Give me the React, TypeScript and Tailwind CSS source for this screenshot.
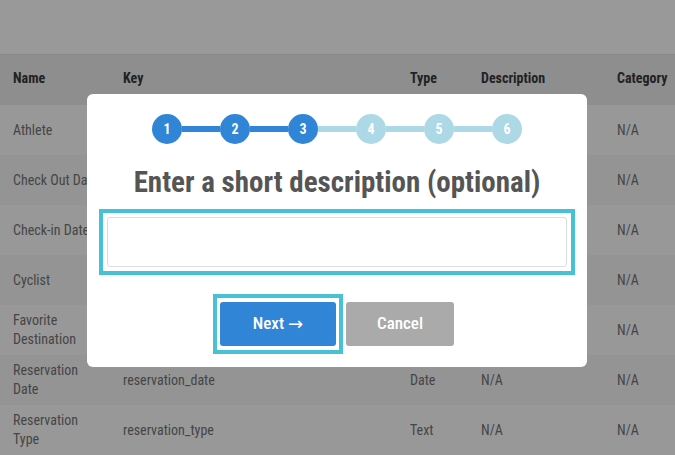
const rows = [
  { name: "Athlete", key: "athlete", type: "Checkbox", desc: "N/A", cat: "N/A" },
  { name: "Check Out Date", key: "check_out_date", type: "Date", desc: "N/A", cat: "N/A" },
  { name: "Check-in Date", key: "check_in_date", type: "Date", desc: "N/A", cat: "N/A" },
  { name: "Cyclist", key: "cyclist", type: "Checkbox", desc: "N/A", cat: "N/A" },
  { name: "Favorite Destination", key: "favorite_destination", type: "Text", desc: "N/A", cat: "N/A" },
  { name: "Reservation Date", key: "reservation_date", type: "Date", desc: "N/A", cat: "N/A" },
  { name: "Reservation Type", key: "reservation_type", type: "Text", desc: "N/A", cat: "N/A" },
];

function Stepper() {
  const steps = [1, 2, 3, 4, 5, 6];
  return (
    <div className="flex items-center justify-center">
      {steps.map((s, i) => (
        <div key={s} className="flex items-center">
          {i > 0 && (
            <div className={`h-[6px] w-[38px] ${s <= 3 ? "bg-[#3185d6]" : "bg-[#add8e6]"}`} />
          )}
          <div
            className={`flex h-[30px] w-[30px] items-center justify-center rounded-full text-[14px] font-bold text-white ${
              s <= 3 ? "bg-[#3185d6]" : "bg-[#add8e6]"
            }`}
          >
            {s}
          </div>
        </div>
      ))}
    </div>
  );
}

export default function App() {
  return (
    <div className="relative h-[455px] w-[675px] overflow-hidden bg-[#999999] font-['Roboto_Condensed',_'Roboto',_sans-serif] text-[14px]">
      <div className="h-[55px] border-b border-[#888888]" />
      <div className="flex h-[50px] items-center bg-[#8e8e8e] pb-[4px] pl-[13px] font-bold text-[#222222]">
        <div className="w-[110px]">Name</div>
        <div className="w-[287px]">Key</div>
        <div className="w-[71px]">Type</div>
        <div className="w-[136px]">Description</div>
        <div className="flex-1">Category</div>
      </div>
      {rows.map((r, i) => (
        <div
          key={r.key}
          className={`flex h-[50px] items-center pl-[13px] leading-[19px] text-[#454545] ${
            i % 2 === 0 ? "bg-[#989898]" : "bg-[#949494]"
          }`}
        >
          <div className="w-[110px] pr-[20px]">{r.name}</div>
          <div className="w-[287px]">{r.key}</div>
          <div className="w-[71px]">{r.type}</div>
          <div className="w-[136px]">{r.desc}</div>
          <div className="flex-1">{r.cat}</div>
        </div>
      ))}

      <div className="absolute left-[87px] top-[94px] flex w-[500px] flex-col items-center rounded-[6px] bg-white pb-[21px] pt-[20px]">
        <Stepper />
        <h1 className="mt-[20px] text-center text-[29px] font-bold leading-[36px] text-[#555555]">
          Enter a short description (optional)
        </h1>
        <div className="-mx-[8px] mt-[9px] border-4 border-[#47c1d4] p-[4px]">
          <input
            type="text"
            className="block h-[50px] w-[460px] rounded-[3px] border border-[#dddddd] bg-white outline-none"
          />
        </div>
        <div className="mt-[27px] flex justify-center gap-[10px]">
          <div className="-mx-[7px] -my-[8px] border-4 border-[#47c1d4] px-[3px] py-[4px]">
            <button className="flex h-[44px] w-[116px] items-center justify-center gap-[4px] rounded-[3px] bg-[#3185d6] text-[17px] font-medium text-white">
              <span>Next</span>
              <span className="font-['DejaVu_Sans',_sans-serif] text-[18px] font-normal leading-none">→</span>
            </button>
          </div>
          <button className="h-[44px] w-[108px] rounded-[3px] bg-[#aaaaaa] text-[17px] font-medium text-white">
            Cancel
          </button>
        </div>
      </div>
    </div>
  );
}
